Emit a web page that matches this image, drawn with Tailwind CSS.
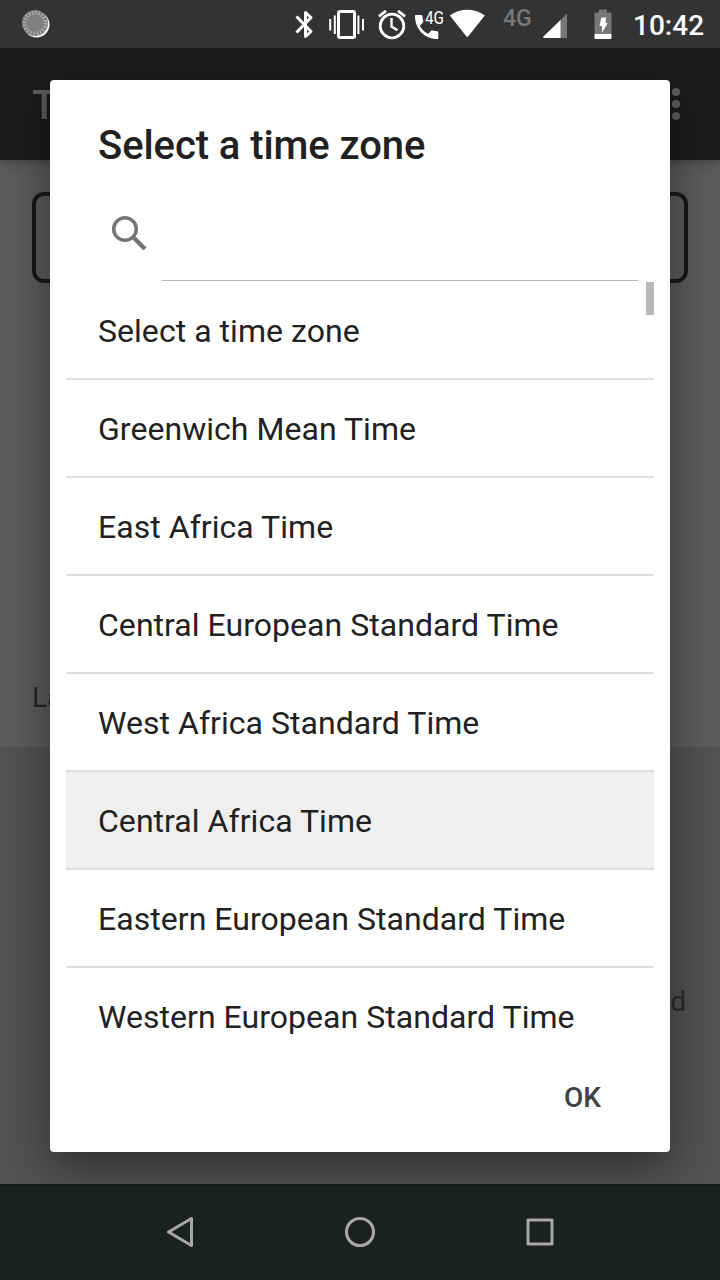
<!DOCTYPE html>
<html lang="en">
<head>
    <meta charset="UTF-8">
    <meta name="viewport" content="width=device-width, initial-scale=1.0">
    <title>Select a time zone</title>
    <script src="https://cdn.jsdelivr.net/npm/@tailwindcss/browser@4"></script>
</head>
<body class="font-[Roboto,sans-serif]">
    <div class="relative flex flex-col w-[720px] h-[1280px] overflow-hidden bg-[#5c5c5c]">
        <!-- Status Bar -->
        <header class="relative z-20 h-12 shrink-0 flex items-center bg-[#333333] text-white">
            <svg class="ml-5 w-8 h-12" viewBox="0 0 32 48">
                <circle cx="16.5" cy="24.5" r="13" fill="#f5f5f5"/>
                <circle cx="15" cy="23" r="13" fill="#808080"/>
                <circle cx="15" cy="23" r="10.5" fill="none" stroke="#b0b0b0" stroke-width="4" stroke-dasharray="1.3 2"/>
            </svg>
            <!-- bluetooth -->
            <svg class="ml-[240px] w-[26px] h-12" viewBox="292 0 26 48" fill="none" stroke="#fff" stroke-width="3">
                <path d="M296.500 16.500L311 31.500L305.500 36.500V12.500L311 17.500L296.500 32.500" stroke-linejoin="round"/>
            </svg>
            <!-- vibrate -->
            <svg class="ml-2.5 w-[38px] h-12" viewBox="328 0 38 48" fill="none" stroke="#fff">
                <rect x="338.500" y="11.500" width="16" height="26" rx="1.500" stroke-width="3"/>
                <path d="M334.800 15.500V34M358.400 15.500V34M330.200 19V30.500M363 19V30.500" stroke-width="2"/>
            </svg>
            <!-- alarm -->
            <svg class="ml-2.5 w-8 h-12" viewBox="376 0 32 48" fill="none" stroke="#fff">
                <circle cx="392" cy="26" r="11.800" stroke-width="2.800"/>
                <path d="M391.500 18V26.500L397.500 30.200" stroke-width="2.400"/>
                <path d="M379 16.300L386 10.800M398 10.800L405 16.300" stroke-width="2.800"/>
            </svg>
            <!-- 4G call -->
            <div class="relative ml-1.5 w-8 h-12">
                <svg class="w-8 h-12" viewBox="414 0 32 48" fill="#fff">
                    <path d="M416 15h5.300c.7 0 1 .4 1.100 1.100.2 2 .4 3.500.9 5.200.1.500 0 .9-.3 1.200l-3.200 3.200c2 3.700 4.500 6.200 8.200 8.200l3.200-3.200c.3-.3.7-.4 1.200-.3 1.600.5 3.200.8 4.800.8.700 0 1.100.4 1.100 1.100V38c0 .6-.4 1-1 1C424.500 39 415 29 415 16c0-.6.400-1 1-1z"/>
                </svg>
                <span class="absolute left-[11px] top-[9px] text-[18px] leading-[18px] origin-left scale-x-[.85]">4G</span>
            </div>
            <!-- wifi -->
            <svg class="ml-0.5 w-10 h-12" viewBox="448 0 40 48" fill="#fff">
                <path d="M449.800 15.500C460 7.800 474.500 7.800 484.800 15.500L468.300 36.200Q467.300 37.400 466.300 36.200Z"/>
            </svg>
            <span class="ml-[15px] w-8 -mt-2.5 text-[23px] leading-6 font-medium text-[#777777]">4G</span>
            <!-- signal -->
            <svg class="ml-1.5 w-7 h-12" viewBox="541 0 28 48">
                <path d="M560 20.500L567 13.500V38H560Z" fill="#777777"/>
                <path d="M543.500 36.500L560.500 20V38H544.200Q542.500 38 543.500 36.500Z" fill="#fff"/>
            </svg>
            <!-- battery -->
            <svg class="ml-[25px] w-5 h-12" viewBox="594 0 20 48">
                <path d="M599 9.500h8v3h3.500q1 0 1 1V34h-17V13.500q0-1 1-1H599Z" fill="#777777"/>
                <path d="M594.500 34h17v4q0 1-1 1h-15q-1 0-1-1Z" fill="#fff"/>
                <path d="M601.300 17.500H606L605.600 23H607.800L602 32.500V26H599.500Z" fill="#fff"/>
            </svg>
            <span class="ml-[19px] text-[28px] leading-8 font-medium mt-1 whitespace-nowrap">10:42</span>
        </header>

        <!-- App Bar -->
        <div class="relative h-28 shrink-0 flex items-center justify-between pl-8 pr-10 bg-[#1b1b1b] shadow-[0_2px_10px_rgba(0,0,0,0.3)]">
            <h1 class="w-[220px] text-[40px] leading-[48px] font-medium text-[#5c5c5c] mt-1">Time zone</h1>
            <div class="flex flex-col gap-1">
                <span class="w-2 h-2 rounded-full bg-[#5f5f5f]"></span>
                <span class="w-2 h-2 rounded-full bg-[#5f5f5f]"></span>
                <span class="w-2 h-2 rounded-full bg-[#5f5f5f]"></span>
            </div>
        </div>

        <!-- Page behind the dialog -->
        <main class="flex-1 flex flex-col">
            <div class="mx-8 mt-8 h-[91px] border-4 border-[#191919] rounded-[12px]"></div>
            <p class="mt-[399px] ml-8 text-[28px] leading-8 text-[#252525]">Last</p>
            <div class="mt-[33px] flex-1 bg-[#535353] pt-[239px] pr-[34px] text-right text-[28px] leading-8 text-[#2b2b2b]">d</div>
        </main>

        <!-- Navigation Bar -->
        <nav class="relative z-20 h-24 shrink-0 flex justify-center items-center bg-[#1d2021] border-t-2 border-[#17181a]">
            <div class="w-[180px] flex justify-center">
                <svg class="w-9 h-9" viewBox="0 0 36 36" fill="none" stroke="#a6a6a6" stroke-width="3" stroke-linejoin="round">
                    <path d="M6.500 17L29.500 3.500V30.500Z"/>
                </svg>
            </div>
            <div class="w-[180px] flex justify-center">
                <svg class="w-9 h-9" viewBox="0 0 36 36" fill="none" stroke="#a6a6a6" stroke-width="3.200">
                    <circle cx="18" cy="17" r="13.500"/>
                </svg>
            </div>
            <div class="w-[180px] flex justify-center">
                <svg class="w-9 h-9" viewBox="0 0 36 36" fill="none" stroke="#a6a6a6" stroke-width="3" stroke-linejoin="round">
                    <rect x="6" y="5" width="24" height="24"/>
                </svg>
            </div>
        </nav>

        <!-- Time zone dialog -->
        <div class="absolute z-10 left-[50px] top-20 w-[620px] h-[1072px] flex flex-col bg-white rounded-[4px] shadow-[0_16px_48px_rgba(0,0,0,0.45)] text-[#212121]">
            <h2 class="mt-[42px] ml-12 text-[40px] leading-[48px] font-medium tracking-[-0.08px] whitespace-nowrap">Select a time zone</h2>
            <div class="mt-[23px] pl-[60px] pr-8 h-[88px] flex gap-[14px]">
                <svg class="mt-[21px] w-[38px] h-[38px] shrink-0" viewBox="0 0 38 38" fill="none" stroke="#757575">
                    <circle cx="15" cy="15" r="11.300" stroke-width="3.500"/>
                    <path d="M24 24L35 35" stroke-width="4.400"/>
                </svg>
                <div class="flex-1 border-b border-[#b5b5b5]"></div>
            </div>
            <div class="relative mt-px mx-4 h-[784px]">
                <ul class="text-[32px] leading-[38px] tracking-[0.04px] whitespace-nowrap">
                    <li class="h-[98px] flex items-center pt-0.5 pl-8 border-b-2 border-[#dedede]"><span>Select a time zone</span></li>
                    <li class="h-[98px] flex items-center pt-0.5 pl-8 border-b-2 border-[#dedede]"><span>Greenwich Mean Time</span></li>
                    <li class="h-[98px] flex items-center pt-0.5 pl-8 border-b-2 border-[#dedede]"><span>East Africa Time</span></li>
                    <li class="h-[98px] flex items-center pt-0.5 pl-8 border-b-2 border-[#dedede]"><span>Central European Standard Time</span></li>
                    <li class="h-[98px] flex items-center pt-0.5 pl-8 border-b-2 border-[#dedede]"><span>West Africa Standard Time</span></li>
                    <li class="h-[98px] flex items-center pt-0.5 pl-8 border-b-2 border-[#dedede] bg-[#efefef]"><span>Central Africa Time</span></li>
                    <li class="h-[98px] flex items-center pt-0.5 pl-8 border-b-2 border-[#dedede]"><span>Eastern European Standard Time</span></li>
                    <li class="h-[96px] flex items-center pt-0.5 pl-8"><span>Western European Standard Time</span></li>
                </ul>
                <div class="absolute right-0 top-0 w-2 h-[33px] bg-[#b9b9b9]"></div>
            </div>
            <button class="self-end mr-[69px] mt-4 text-[28px] leading-8 font-medium text-[#424242]">OK</button>
        </div>
    </div>
</body>
</html>
